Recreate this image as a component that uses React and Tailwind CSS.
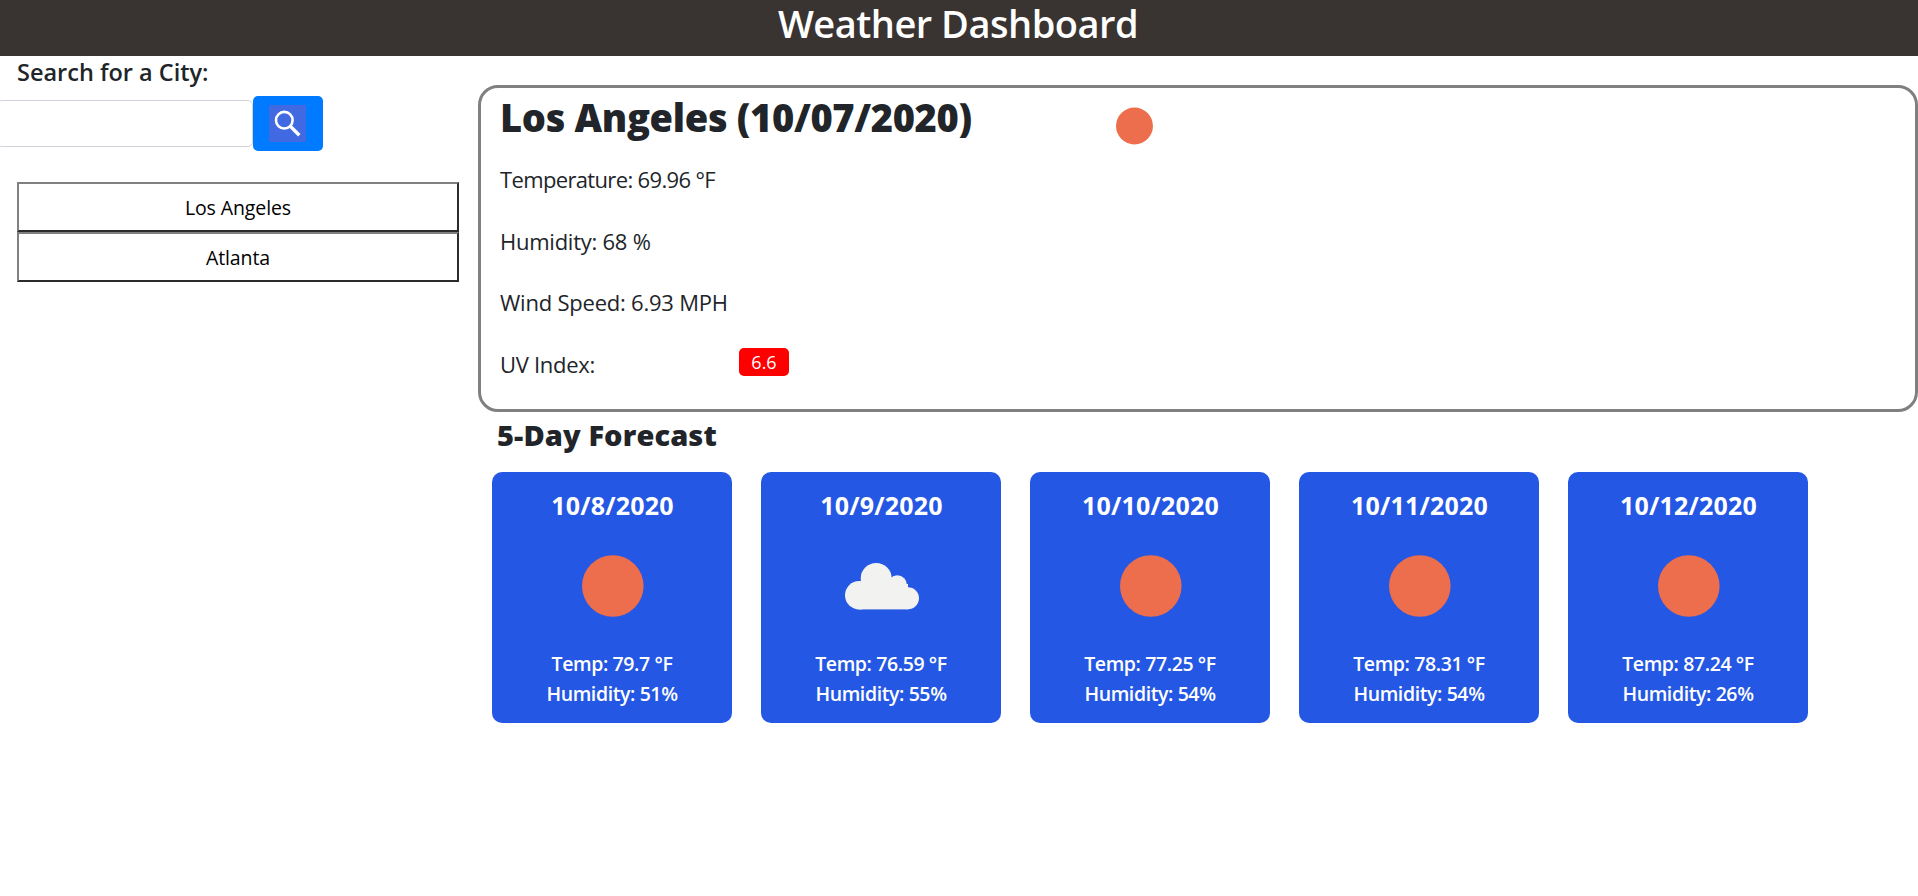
import React from "react";

const history = ["Los Angeles", "Atlanta"];

const days = [
  { date: "10/8/2020", icon: "sun", temp: "79.7", humidity: 51 },
  { date: "10/9/2020", icon: "cloud", temp: "76.59", humidity: 55 },
  { date: "10/10/2020", icon: "sun", temp: "77.25", humidity: 54 },
  { date: "10/11/2020", icon: "sun", temp: "78.31", humidity: 54 },
  { date: "10/12/2020", icon: "sun", temp: "87.24", humidity: 26 },
];

function WeatherIcon({ kind, className }) {
  return (
    <svg viewBox="0 0 100 100" className={className} aria-hidden="true">
      {kind === "sun" ? (
        <circle cx="50.8" cy="50" r="30.8" fill="#ec6e4c" />
      ) : (
        <g fill="#f2f2f0">
          <circle cx="28.2" cy="59.2" r="14.2" />
          <circle cx="45.2" cy="42.5" r="15.5" />
          <circle cx="66.3" cy="49" r="9.7" />
          <circle cx="77" cy="62.3" r="11" />
          <rect x="28" y="48" width="49" height="25.4" />
        </g>
      )}
    </svg>
  );
}

function SearchIcon() {
  return (
    <svg viewBox="0 0 37 37" className="mr-px size-[37px] bg-[#4169e1]" fill="none" stroke="#fff" aria-hidden="true">
      <circle cx="15.3" cy="15.2" r="8.3" strokeWidth="2.6" />
      <path d="M21.3 21.3 L30.3 30.3" strokeWidth="3.4" />
    </svg>
  );
}

function Sidebar() {
  return (
    <aside className="w-[478px] shrink-0">
      <h2 className="pl-[17px] text-[23.5px] leading-8 font-semibold">Search for a City:</h2>
      <form className="mt-2 flex items-center" onSubmit={(e) => e.preventDefault()}>
        <input
          type="text"
          aria-label="City"
          className="-ml-[3px] h-[47px] w-[256px] rounded-[5px] border border-[#ced4da] bg-white px-3 text-xl outline-none"
        />
        <button className="flex h-[55px] w-[70px] items-center justify-center rounded-[5px] bg-[#007bff]" aria-label="Search">
          <SearchIcon />
        </button>
      </form>
      <div className="mt-[31px] ml-[17px] flex w-[442px] flex-col">
        {history.map((city) => (
          <button
            key={city}
            className="h-[50px] border-2 border-t-[#808080] border-r-[#2b2b2b] border-b-[#2b2b2b] border-l-[#808080] pt-0.5 text-[19.5px] tracking-[-0.1px] text-black"
          >
            {city}
          </button>
        ))}
      </div>
    </aside>
  );
}

function CurrentWeather() {
  return (
    <section className="h-[327px] rounded-[20px] border-[3px] border-[#808080] pl-[19px] text-[22px]">
      <div className="flex h-14 items-center">
        <h2 className="w-[618px] pt-0.5 text-[38px] leading-[56px] font-extrabold tracking-[-0.33px] whitespace-nowrap">
          Los Angeles (10/07/2020)
        </h2>
        <WeatherIcon kind="sun" className="mt-5 -ml-[14px] size-[60px]" />
      </div>
      <div className="mt-[5px] flex flex-col">
        <p className="h-[61.6px] leading-[61.6px] tracking-[-0.65px]">Temperature: 69.96 °F</p>
        <p className="h-[61.6px] leading-[61.6px] tracking-[-0.25px]">Humidity: 68 %</p>
        <p className="h-[61.6px] leading-[61.6px] tracking-[-0.22px]">Wind Speed: 6.93 MPH</p>
        <div className="flex h-[61.6px] items-center">
          <p className="w-[239px] tracking-[-0.3px]">UV Index:</p>
          <span className="mb-[5px] flex h-7 w-[50px] items-center justify-center rounded-[5px] bg-[#ff0000] text-lg leading-7 text-white">
            6.6
          </span>
        </div>
      </div>
    </section>
  );
}

function DayCard({ day }) {
  return (
    <article className="flex h-[251px] w-60 flex-col items-center rounded-[10px] bg-[#2457e3] pt-[15px] text-white">
      <h3 className="pl-px text-[25px] leading-9 font-bold tracking-[0.2px]">{day.date}</h3>
      <WeatherIcon kind={day.icon} className="mt-[13px] size-[100px]" />
      <div className="mt-[13px] text-center text-[19.5px] leading-[30px] font-semibold tracking-[-0.4px]">
        <p>Temp: {day.temp} °F</p>
        <p>Humidity: {day.humidity}%</p>
      </div>
    </article>
  );
}

export default function App() {
  return (
    <div className="min-h-screen bg-white font-['Open_Sans','Noto_Sans',sans-serif] text-[#212529]">
      <header className="h-14 bg-[#393332]">
        <h1 className="pr-0.5 text-center text-[38px] leading-[46px] font-semibold tracking-[-0.5px] text-white">
          Weather Dashboard
        </h1>
      </header>
      <div className="flex">
        <Sidebar />
        <main className="flex-1 pt-[29px]">
          <CurrentWeather />
          <h2 className="pt-px pl-[19px] text-[29px] leading-[43px] font-extrabold tracking-[0.1px]">5-Day Forecast</h2>
          <div className="mt-4 ml-[14px] flex gap-[29px]">
            {days.map((day) => (
              <DayCard key={day.date} day={day} />
            ))}
          </div>
        </main>
      </div>
    </div>
  );
}
